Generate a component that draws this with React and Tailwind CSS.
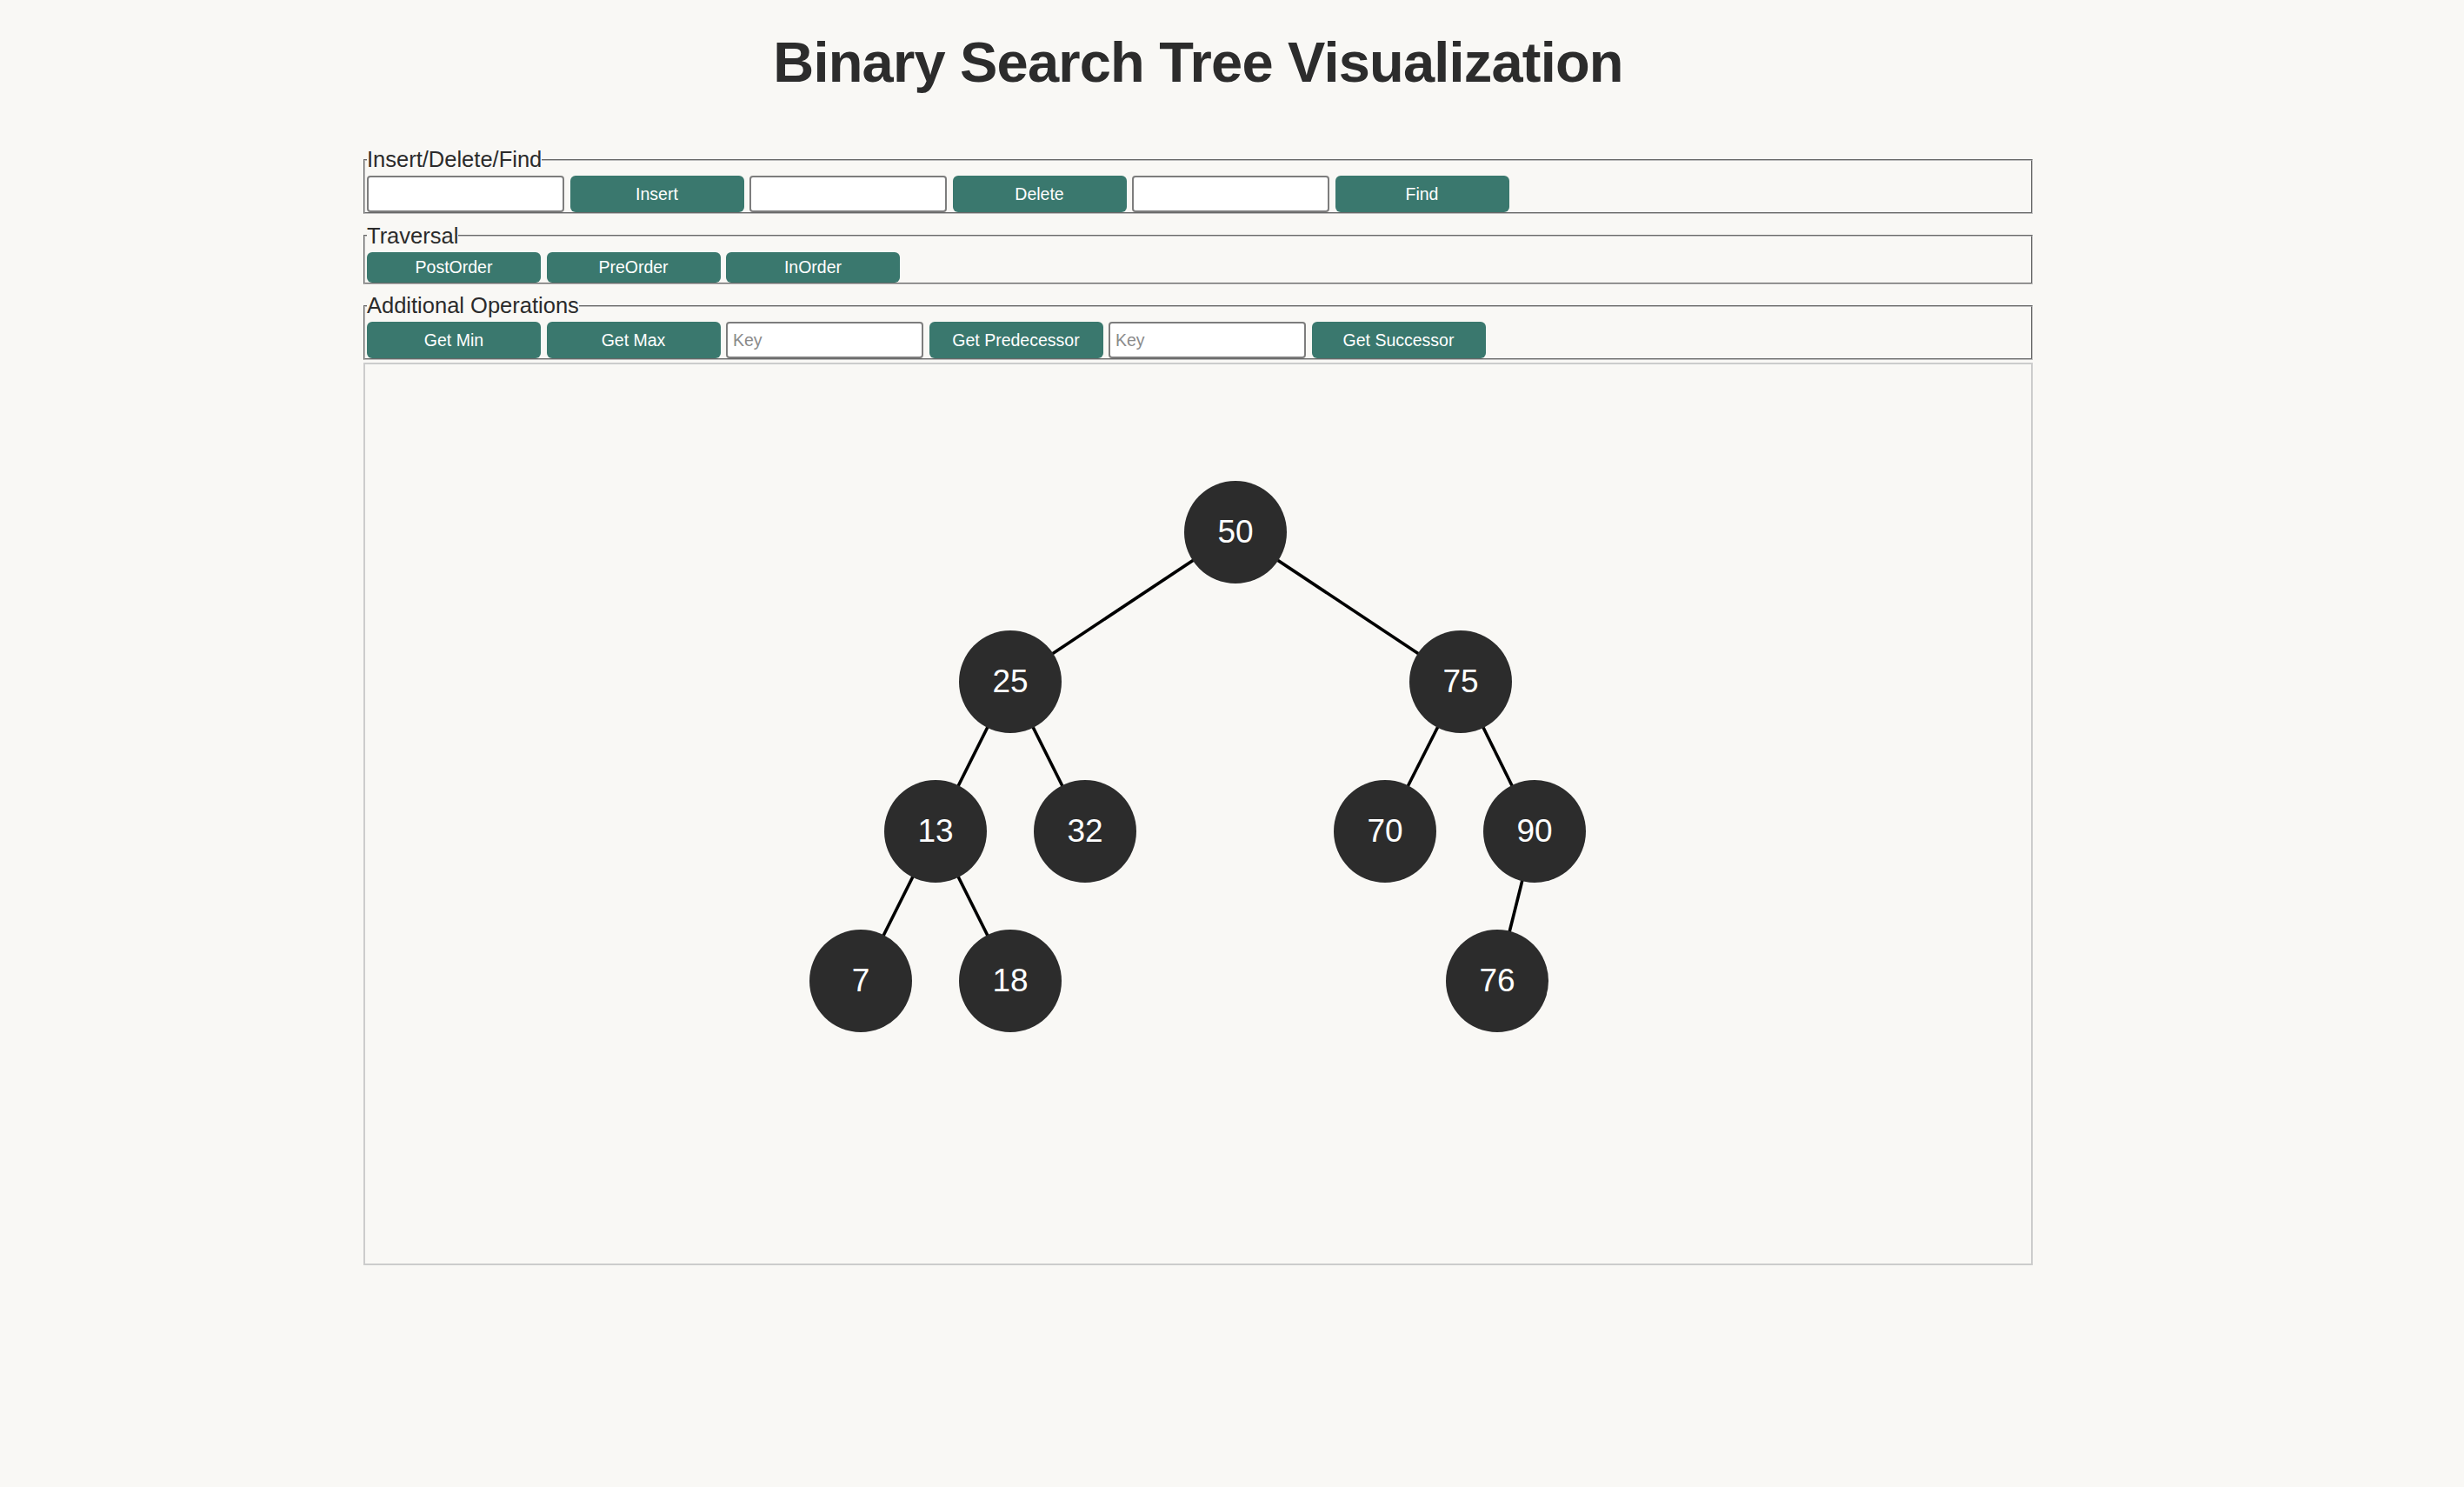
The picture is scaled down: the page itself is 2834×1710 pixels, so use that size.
import React from "react";

const nodes = [
  { v: 50, x: 1001, y: 193 },
  { v: 25, x: 742, y: 365 },
  { v: 75, x: 1260, y: 365 },
  { v: 13, x: 656, y: 537 },
  { v: 32, x: 828, y: 537 },
  { v: 70, x: 1173, y: 537 },
  { v: 90, x: 1345, y: 537 },
  { v: 7, x: 570, y: 709 },
  { v: 18, x: 742, y: 709 },
  { v: 76, x: 1302, y: 709 },
];

const edges = [
  [50, 25],
  [50, 75],
  [25, 13],
  [25, 32],
  [75, 70],
  [75, 90],
  [13, 7],
  [13, 18],
  [90, 76],
];

const byValue = Object.fromEntries(nodes.map((n) => [n.v, n]));

function Btn({ children }) {
  return (
    <button className="w-[200px] shrink-0 rounded-[6px] bg-[#3a786e] py-[6px] text-center text-[19.5px] leading-[23px] text-white">
      {children}
    </button>
  );
}

function Field({ placeholder }) {
  return (
    <input
      type="text"
      placeholder={placeholder}
      className="h-[42px] w-[227px] shrink-0 rounded-[4px] border-2 border-[#7d7d7d] bg-white px-[6px] text-[19.5px] text-[#222] placeholder:text-[#8a8a8a] outline-none"
    />
  );
}

function Group({ title, children, last }) {
  return (
    <fieldset
      className={`border-2 border-[#bcbcbc] px-[2px] [border-style:groove] ${last ? "mb-[2.5px]" : "mb-[6.5px]"}`}
    >
      <legend className="text-[25.5px] leading-[37px] text-[#2b2b2b]">{title}</legend>
      <div className="flex gap-[6.5px]">{children}</div>
    </fieldset>
  );
}

export default function App() {
  return (
    <div className="min-h-screen bg-[#f9f8f5] font-['Liberation_Sans',Arial,sans-serif] pb-[255px]">
      <div className="ml-[418px] w-[1920px] pt-[34px]">
        <h1 className="mb-[56px] text-center text-[65px] font-bold leading-[75px] tracking-[-0.8px] text-[#2c2c2c]">
          Binary Search Tree Visualization
        </h1>

        {/* Insert / Delete / Find */}
        <Group title="Insert/Delete/Find">
          <Field />
          <Btn>Insert</Btn>
          <Field />
          <Btn>Delete</Btn>
          <Field />
          <Btn>Find</Btn>
        </Group>

        {/* Traversal */}
        <Group title="Traversal">
          <Btn>PostOrder</Btn>
          <Btn>PreOrder</Btn>
          <Btn>InOrder</Btn>
        </Group>

        {/* Additional Operations */}
        <Group title="Additional Operations" last>
          <Btn>Get Min</Btn>
          <Btn>Get Max</Btn>
          <Field placeholder="Key" />
          <Btn>Get Predecessor</Btn>
          <Field placeholder="Key" />
          <Btn>Get Successor</Btn>
        </Group>

        {/* Tree canvas */}
        <div className="h-[1038px] w-[1920px] border-2 border-[#cccccc]">
          <svg width="1916" height="1034" className="block">
            {edges.map(([a, b]) => (
              <line
                key={`${a}-${b}`}
                x1={byValue[a].x}
                y1={byValue[a].y}
                x2={byValue[b].x}
                y2={byValue[b].y}
                stroke="#000"
                strokeWidth="3.6"
              />
            ))}
            {nodes.map((n) => (
              <g key={n.v}>
                <circle cx={n.x} cy={n.y} r="59" fill="#2c2c2c" />
                <text
                  x={n.x}
                  y={n.y + 12}
                  textAnchor="middle"
                  fill="#fff"
                  fontSize="37"
                  fontFamily="'Liberation Sans', Arial, sans-serif"
                >
                  {n.v}
                </text>
              </g>
            ))}
          </svg>
        </div>
      </div>
    </div>
  );
}
